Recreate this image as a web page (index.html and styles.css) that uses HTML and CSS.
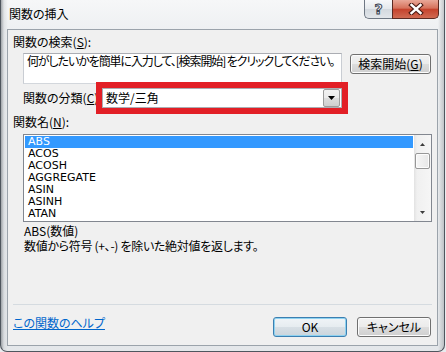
FILE: index.html
```html
<!DOCTYPE html>
<html lang="ja">
<head>
<meta charset="UTF-8">
<title>関数の挿入</title>
<link rel="stylesheet" href="styles.css">
</head>
<body>
    <div class="window">
        <div class="titlebar">
            <span class="title">関数の挿入</span>
            <div class="caption">
                <div class="cap-btn cap-help">?</div>
                <div class="cap-btn cap-close">
                    <svg width="16" height="12" viewBox="0 0 16 12">
                        <path d="M3.5 2 L12.5 10 M12.5 2 L3.5 10" stroke="#4a1b14" stroke-width="4.6" stroke-linecap="square"/>
                        <path d="M3.5 2 L12.5 10 M12.5 2 L3.5 10" stroke="#ffffff" stroke-width="2.4" stroke-linecap="square"/>
                    </svg>
                </div>
            </div>
        </div>

        <div class="client">
            <div class="label top-label">関数の検索(<u>S</u>):</div>
            <div class="search-row">
                <div class="search-box">何がしたいかを簡単に入力して、[検索開始] をクリックしてください。</div>
                <button class="btn search-btn">検索開始(<u>G</u>)</button>
            </div>

            <div class="category-row">
                <span class="category-label">関数の分類(<u>C</u>):</span>
                <div class="combo">
                    <span class="combo-text">数学/三角</span>
                    <span class="combo-btn"><i class="tri-down"></i></span>
                </div>
            </div>

            <div class="label name-label">関数名(<u>N</u>):</div>
            <div class="listbox">
                <ul class="items">
                    <li class="selected">ABS</li>
                    <li>ACOS</li>
                    <li>ACOSH</li>
                    <li>AGGREGATE</li>
                    <li>ASIN</li>
                    <li>ASINH</li>
                    <li>ATAN</li>
                </ul>
                <div class="vscroll">
                    <div class="arrow"><i class="tri-up"></i></div>
                    <div class="thumb"></div>
                    <div class="track"></div>
                    <div class="arrow arrow-down"><i class="tri-small-down"></i></div>
                </div>
            </div>

            <div class="about">
                <div>ABS(数値)</div>
                <div class="desc">数値から符号 (+、-) を除いた絶対値を返します。</div>
            </div>

            <div class="separator"></div>

            <div class="footer">
                <a class="help-link" href="#">この関数のヘルプ</a>
                <button class="btn ok-btn">OK</button>
                <button class="btn cancel-btn">キャンセル</button>
            </div>
        </div>
    </div>
</body>
</html>
```

FILE: styles.css
```css
body {
    margin: 0;
    background: #e9ebee;
    font-family: "Noto Sans CJK JP", sans-serif;
    font-size: 12px;
    font-feature-settings: "palt";
    color: #000;
}
.window {
    width: 445px;
    height: 352px;
    box-sizing: border-box;
    border: 1px solid #4f565e;
    border-top: 0;
    border-radius: 0 0 7px 7px;
    background:
        linear-gradient(90deg, rgba(110, 116, 122, 0.6) 0, rgba(200, 204, 208, 0.4) 3px, rgba(255, 255, 255, 0) 7px),
        linear-gradient(270deg, rgba(150, 155, 160, 0.5) 0, rgba(255, 255, 255, 0) 6px),
        linear-gradient(180deg, #f6f7f8 0, #eef0f2 30px, #e4e7ea 100%);
    display: flex;
    flex-direction: column;
}
.titlebar {
    height: 29px;
    flex-shrink: 0;
    display: flex;
    align-items: flex-start;
}
.title {
    margin: 7px 0 0 8px;
    line-height: 14px;
}
.caption {
    margin-left: auto;
    margin-right: 5px;
    display: flex;
}
.cap-btn {
    height: 19px;
    box-sizing: border-box;
    display: flex;
    align-items: center;
    justify-content: center;
}
.cap-help {
    width: 28px;
    border: 1px solid #6e7783;
    border-top: 0;
    border-right: 0;
    border-radius: 0 0 0 5px;
    background: linear-gradient(#f7f8fa, #e4e8ec 50%, #d3d9df 51%, #e2e6ea);
    font-family: "DejaVu Sans", sans-serif;
    font-weight: bold;
    font-size: 14px;
    color: #f4f6f8;
    -webkit-text-stroke: 1px #3b4452;
    line-height: 17px;
}
.cap-close {
    width: 47px;
    border: 1px solid #5b2a22;
    border-top: 0;
    border-radius: 0 0 5px 0;
    background: linear-gradient(#e9a898, #d6725c 45%, #c5432d 52%, #d06a52);
}
.client {
    width: 431px;
    height: 317px;
    box-sizing: border-box;
    margin-left: 6px;
    border: 1px solid #9ba3ab;
    background: #f0f0f0;
    padding: 0 6px 0 5px;
    display: flex;
    flex-direction: column;
}
.label {
    line-height: 14px;
}
.top-label {
    margin-top: 5px;
}
.search-row {
    display: flex;
    align-items: flex-start;
    gap: 8px;
    margin: 4px 0 0 10px;
}
.search-box {
    width: 319px;
    height: 31px;
    box-sizing: border-box;
    border: 1px solid #abadb3;
    border-color: #abadb3 #c9cdd3 #d3d7dc #c9cdd3;
    background: #fff;
    padding-left: 3px;
    line-height: 14px;
    letter-spacing: -1.1px;
    white-space: nowrap;
    overflow: hidden;
}
.btn {
    font: inherit;
    font-size: 12px;
    line-height: 14px;
    color: #000;
    height: 20px;
    box-sizing: border-box;
    padding: 0;
    border: 1px solid #707070;
    border-radius: 3px;
    background: linear-gradient(#f2f2f2, #ebebeb 50%, #dddddd 51%, #cfcfcf);
    box-shadow: inset 0 0 0 1px #fcfcfc;
}
.search-btn {
    width: 81px;
    margin-top: 1px;
}
.category-row {
    display: flex;
    align-items: center;
    height: 20px;
    margin: 4px 0 0 10px;
}
.category-label {
    width: 79px;
    white-space: nowrap;
    line-height: 14px;
}
.combo {
    width: 240px;
    height: 20px;
    box-sizing: border-box;
    border: 1px solid #abadb3;
    background: #fff;
    outline: 6px solid #e21f26;
    display: flex;
    align-items: center;
    padding-left: 3px;
}
.combo-text {
    line-height: 14px;
}
.combo-btn {
    margin-left: auto;
    margin-right: 1px;
    width: 17px;
    height: 18px;
    box-sizing: border-box;
    border: 1px solid #9c9c9c;
    border-radius: 2px;
    background: linear-gradient(#f2f2f2, #ebebeb 50%, #dddddd 51%, #cfcfcf);
    display: flex;
    align-items: center;
    justify-content: center;
}
.tri-down {
    width: 7px;
    height: 4px;
    background: #000;
    clip-path: polygon(0 0, 100% 0, 50% 100%);
}
.name-label {
    margin-top: 7px;
}
.listbox {
    width: 409px;
    height: 88px;
    box-sizing: border-box;
    margin: 5px 0 0 10px;
    border: 1px solid #828790;
    background: #fff;
    display: flex;
}
.items {
    flex: 1;
    list-style: none;
    margin: 0;
    padding: 1px;
    font-family: "DejaVu Sans", sans-serif;
    font-size: 11px;
}
.items li {
    height: 12px;
    line-height: 11px;
    padding-left: 3px;
}
.items li.selected {
    background: #3399ff;
    color: #fff;
}
.vscroll {
    width: 17px;
    display: flex;
    flex-direction: column;
    background: linear-gradient(90deg, #e2e2e2, #f0f0f0 3px, #f6f6f6);
}
.arrow {
    height: 17px;
    display: flex;
    justify-content: center;
    padding-top: 8px;
    box-sizing: border-box;
}
.arrow-down {
    padding-top: 7px;
}
.tri-up,
.tri-small-down {
    width: 5px;
    height: 3px;
    background: #3c3c3c;
    clip-path: polygon(50% 0, 100% 100%, 0 100%);
}
.tri-small-down {
    clip-path: polygon(0 0, 100% 0, 50% 100%);
}
.thumb {
    height: 16px;
    box-sizing: border-box;
    margin: 1px 1px 0 1px;
    border: 1px solid #979797;
    border-radius: 2px;
    background: linear-gradient(90deg, #f6f6f6, #e7e7e7);
    box-shadow: inset 0 0 0 1px #fcfcfc;
}
.track {
    flex: 1;
}
.about {
    margin: 1px 0 0 11px;
    line-height: 15px;
}
.desc {
    letter-spacing: -0.3px;
}
.separator {
    margin-top: 51px;
    width: 419px;
    height: 1px;
    background: #d5dbe0;
}
.footer {
    display: flex;
    align-items: flex-start;
    margin-top: 12px;
}
.help-link {
    margin-top: -1px;
    line-height: 14px;
    color: #0066cc;
    text-decoration: underline;
}
.ok-btn {
    margin-left: auto;
    width: 74px;
    border-color: #3c7fb1;
    box-shadow: inset 0 0 0 1px #8ed2f0;
    background: linear-gradient(#f0f4f7, #e6ecf0 50%, #d7dfe5 51%, #cbd5dc);
}
.cancel-btn {
    margin-left: 10px;
    width: 74px;
}
```
